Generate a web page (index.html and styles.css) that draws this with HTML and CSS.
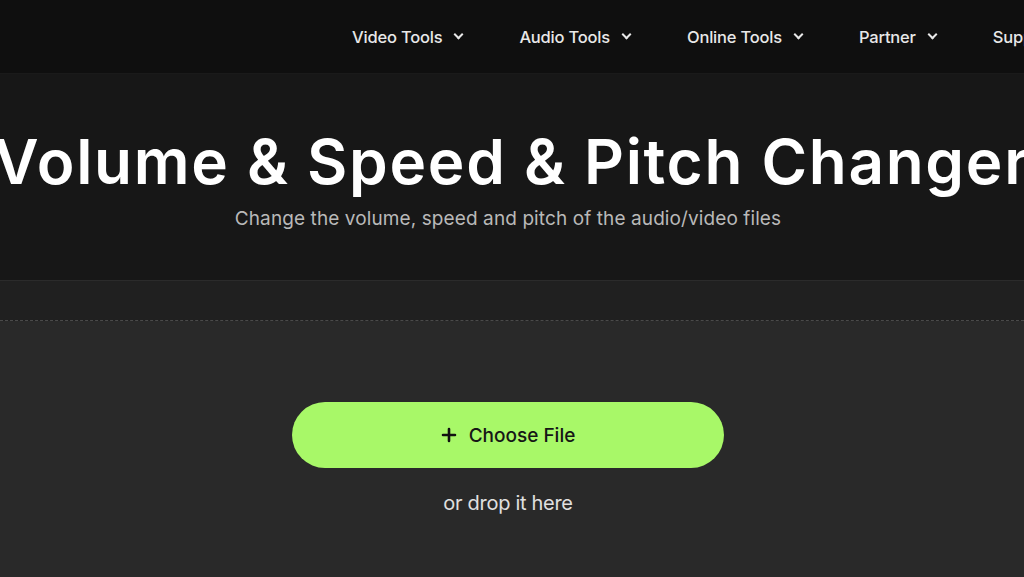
FILE: index.html
```html
<!DOCTYPE html>
<html lang="en">
  <head>
    <meta charset="UTF-8" />
    <meta name="viewport" content="width=device-width, initial-scale=1.0" />
    <title>Volume &amp; Speed &amp; Pitch Changer</title>
    <link rel="stylesheet" href="styles.css">
  </head>
  <body>
    <header class="navbar">
      <div class="brand"></div>
      <ul class="nav-links">
        <li><a href="#">Video Tools <span class="chev"></span></a></li>
        <li><a href="#">Audio Tools <span class="chev"></span></a></li>
        <li><a href="#">Online Tools <span class="chev"></span></a></li>
        <li><a href="#">Partner <span class="chev"></span></a></li>
        <li><a href="#">Support <span class="chev"></span></a></li>
      </ul>
    </header>

    <section class="hero">
      <h1>Volume &amp; Speed &amp; Pitch Changer</h1>
      <p class="subtitle">Change the volume, speed and pitch of the audio/video files</p>
    </section>

    <div class="band"></div>

    <main class="upload">
      <button type="button" class="btn-choose">
        <svg width="16" height="16" viewBox="0 0 16 16">
          <path d="M8 2v12M2 8h12" stroke="#111" stroke-width="2.6" stroke-linecap="round" />
        </svg>
        Choose File
      </button>
      <p class="drop">or drop it here</p>
    </main>
  </body>
</html>
```

FILE: styles.css
```css
* {
  margin: 0;
  padding: 0;
  box-sizing: border-box;
}

html,
body {
  height: 100%;
}

body {
  font-family: Inter, "Open Sans", Arial, sans-serif;
  background-color: #292929;
  color: white;
  overflow: hidden;
  display: flex;
  flex-direction: column;
}

.navbar {
  height: 74px;
  background-color: #0f0f0f;
  border-bottom: 1px solid #1a1a1a;
  display: flex;
  align-items: center;
  white-space: nowrap;
  flex-shrink: 0;
}

.brand {
  width: 352px;
  flex-shrink: 0;
}

.nav-links {
  display: flex;
  list-style: none;
  gap: 57px;
}

.nav-links a {
  color: #e8e8e8;
  text-decoration: none;
  font-size: 16.5px;
  font-weight: 500;
  letter-spacing: -0.2px;
  display: flex;
  align-items: center;
  gap: 13px;
}

.chev {
  width: 7px;
  height: 7px;
  border-right: 2px solid #e8e8e8;
  border-bottom: 2px solid #e8e8e8;
  transform: rotate(45deg);
  margin-top: -4px;
}

.hero {
  height: 207px;
  background-color: #171717;
  border-bottom: 1px solid #2b2b2b;
  text-align: center;
  padding-top: 52px;
  white-space: nowrap;
  overflow: hidden;
  flex-shrink: 0;
}

.hero h1 {
  font-size: 62px;
  font-weight: 600;
  line-height: 72px;
  letter-spacing: 1.7px;
  margin-left: -200px;
  margin-right: -200px;
}

.subtitle {
  margin-top: 9px;
  padding-right: 8px;
  font-size: 19px;
  color: #b9b9b9;
  letter-spacing: 0.1px;
}

.band {
  height: 40px;
  background-color: #202020;
  border-bottom: 1px dashed #4a4a4a;
  flex-shrink: 0;
}

.upload {
  flex: 1;
  display: flex;
  flex-direction: column;
  align-items: center;
  padding-top: 81px;
  padding-right: 8px;
}

.btn-choose {
  width: 432px;
  height: 66px;
  border: none;
  border-radius: 33px;
  background-color: #a8f868;
  color: #161616;
  font-family: inherit;
  font-size: 19px;
  font-weight: 500;
  display: flex;
  align-items: center;
  justify-content: center;
  gap: 12px;
  cursor: pointer;
}

.drop {
  margin-top: 23px;
  font-size: 20px;
  color: #e0e0e0;
  letter-spacing: -0.3px;
}
```
